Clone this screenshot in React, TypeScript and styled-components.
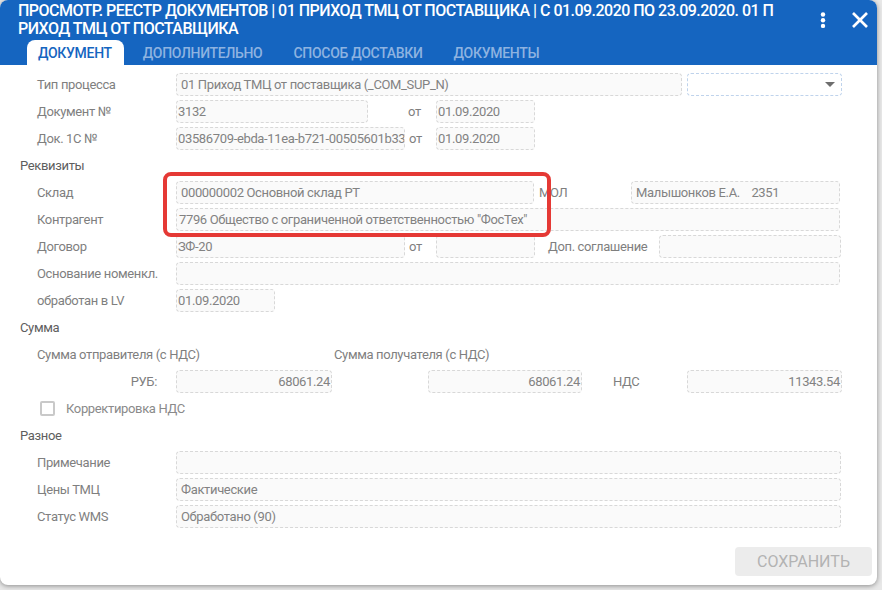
import React from "react";
import styled, { createGlobalStyle } from "styled-components";

const GlobalStyle = createGlobalStyle`
  html, body { margin: 0; padding: 0; }
  body { background: #e6e6e6; font-family: Roboto, "Noto Sans", Arial, sans-serif; }
  * { box-sizing: border-box; }
`;

const Page = styled.div`
  position: relative;
  width: 882px;
  height: 590px;
  overflow: hidden;
  background: #e8e8e8;
`;

const Dialog = styled.div`
  width: 877px;
  height: 585px;
  background: #ffffff;
  border-radius: 8px;
  box-shadow: 0 1px 5px rgba(0, 0, 0, 0.4);
  overflow: hidden;
  display: flex;
  flex-direction: column;
`;

const Header = styled.div`
  background: #1565c0;
  height: 65px;
  display: flex;
  flex-direction: column;
`;

const TitleBar = styled.div`
  display: flex;
  align-items: flex-start;
`;

const Title = styled.div`
  flex: 1;
  padding: 2px 0 0 18px;
  color: #ffffff;
  font-size: 16px;
  line-height: 18px;
  font-weight: 500;
  letter-spacing: -0.52px;
  text-transform: uppercase;
  white-space: nowrap;
  overflow: hidden;
`;

const Actions = styled.div`
  display: flex;
  align-items: center;
  gap: 11px;
  height: 40px;
  padding-right: 4px;
`;

const IconButton = styled.button`
  width: 26px;
  height: 26px;
  padding: 0;
  border: none;
  background: transparent;
  display: flex;
  align-items: center;
  justify-content: center;
  cursor: pointer;
`;

const Tabs = styled.div`
  margin-top: auto;
  display: flex;
  align-items: flex-end;
  gap: 8px;
  padding-left: 27px;
`;

const Tab = styled.div<{ $active?: boolean }>`
  height: 26px;
  padding: 0 12px 0 11px;
  display: flex;
  align-items: center;
  font-size: 14px;
  font-weight: 500;
  letter-spacing: -0.3px;
  text-transform: uppercase;
  border-radius: 8px 8px 0 0;
  background: ${(p) => (p.$active ? "#ffffff" : "transparent")};
  color: ${(p) => (p.$active ? "#1565c0" : "#8eb3e0")};
`;

const Body = styled.div`
  flex: 1;
  display: flex;
  flex-direction: column;
  padding-top: 6px;
  letter-spacing: -0.35px;
`;

const SectionTitle = styled.div`
  height: 27px;
  line-height: 27px;
  padding-left: 20px;
  font-size: 13px;
  color: #5e5e5e;
`;

const Row = styled.div`
  height: 27px;
  display: flex;
  align-items: center;
  padding-left: 37px;
`;

const Label = styled.div<{ $right?: boolean }>`
  width: 139px;
  flex: none;
  font-size: 13px;
  color: #7f7f7f;
  white-space: nowrap;
  text-align: ${(p) => (p.$right ? "right" : "left")};
  padding-right: ${(p) => (p.$right ? "19px" : "0")};
`;

const InlineLabel = styled.div<{ $w: number; $ml?: number }>`
  width: ${(p) => p.$w}px;
  margin-left: ${(p) => p.$ml ?? 0}px;
  flex: none;
  font-size: 13px;
  color: #7f7f7f;
  white-space: nowrap;
`;

const Field = styled.div<{ $w: number; $ml?: number; $pad?: number; $right?: boolean }>`
  width: ${(p) => p.$w}px;
  margin-left: ${(p) => p.$ml ?? 0}px;
  flex: none;
  height: 23px;
  border: 1px dashed #d8d8d8;
  border-radius: 4px;
  background: #fafafa;
  font-size: 13px;
  line-height: 21px;
  color: #828282;
  padding: 0 ${(p) => p.$pad ?? 1}px;
  white-space: nowrap;
  overflow: hidden;
  text-align: ${(p) => (p.$right ? "right" : "left")};
`;

const SelectBox = styled.div<{ $w: number; $ml?: number }>`
  width: ${(p) => p.$w}px;
  margin-left: ${(p) => p.$ml ?? 0}px;
  flex: none;
  height: 23px;
  border: 1px dashed #bfd3ec;
  border-radius: 4px;
  background: #ffffff;
  display: flex;
  align-items: center;
  justify-content: flex-end;
  padding-right: 6px;
`;

const Caret = styled.span`
  width: 0;
  height: 0;
  border-left: 5px solid transparent;
  border-right: 5px solid transparent;
  border-top: 5px solid #6e6e6e;
`;

const SumCaption = styled.div<{ $w: number }>`
  width: ${(p) => p.$w}px;
  flex: none;
  font-size: 13px;
  color: #7f7f7f;
  white-space: nowrap;
`;

const CheckRow = styled.label`
  height: 27px;
  display: flex;
  align-items: center;
  padding-left: 40px;
  gap: 11px;
  font-size: 13px;
  color: #8a8a8a;
`;

const CheckBox = styled.span`
  width: 15px;
  height: 15px;
  border: 2px solid #c9c9c9;
  border-radius: 2px;
  background: #ffffff;
`;

const Footer = styled.div`
  display: flex;
  justify-content: flex-end;
  padding: 17px 5px 0 0;
  letter-spacing: 0;
`;

const SaveButton = styled.button`
  width: 137px;
  height: 29px;
  border: none;
  border-radius: 4px;
  background: #ececec;
  color: #b3b3b3;
  font-family: Roboto, "Noto Sans", Arial, sans-serif;
  font-size: 16px;
  text-transform: uppercase;
  padding: 0;
`;

const Highlight = styled.div`
  position: absolute;
  left: 163px;
  top: 172px;
  width: 388px;
  height: 65px;
  border: 4px solid #e53935;
  border-radius: 8px;
  pointer-events: none;
`;

const KebabIcon = () => (
  <svg width="24" height="24" viewBox="0 0 24 24" fill="#ffffff">
    <circle cx="12" cy="6.5" r="2.2" />
    <circle cx="12" cy="12.2" r="2.2" />
    <circle cx="12" cy="17.9" r="2.2" />
  </svg>
);

const CloseIcon = () => (
  <svg width="26" height="26" viewBox="0 0 26 26" stroke="#ffffff" strokeWidth="2.6" fill="none">
    <line x1="6" y1="6" x2="20" y2="20" />
    <line x1="20" y1="6" x2="6" y2="20" />
  </svg>
);

export default function App() {
  return (
    <Page>
      <GlobalStyle />
      <Dialog>
        <Header>
          <TitleBar>
            <Title>
              ПРОСМОТР. РЕЕСТР ДОКУМЕНТОВ | 01 ПРИХОД ТМЦ ОТ ПОСТАВЩИКА | С 01.09.2020 ПО 23.09.2020. 01 П
              <br />
              РИХОД ТМЦ ОТ ПОСТАВЩИКА
            </Title>
            <Actions>
              <IconButton aria-label="menu">
                <KebabIcon />
              </IconButton>
              <IconButton aria-label="close">
                <CloseIcon />
              </IconButton>
            </Actions>
          </TitleBar>
          <Tabs>
            <Tab $active>Документ</Tab>
            <Tab>Дополнительно</Tab>
            <Tab>Способ доставки</Tab>
            <Tab>Документы</Tab>
          </Tabs>
        </Header>
        <Body>
          <Row>
            <Label>Тип процесса</Label>
            <Field $w={506} $pad={4}>01 Приход ТМЦ от поставщика (_COM_SUP_N)</Field>
            <SelectBox $w={155} $ml={5}>
              <Caret />
            </SelectBox>
          </Row>
          <Row>
            <Label>Документ №</Label>
            <Field $w={192}>3132</Field>
            <InlineLabel $w={28} $ml={40}>от</InlineLabel>
            <Field $w={99}>01.09.2020</Field>
          </Row>
          <Row>
            <Label>Док. 1С №</Label>
            <Field $w={229}>03586709-ebda-11ea-b721-00505601b33</Field>
            <InlineLabel $w={27} $ml={4}>от</InlineLabel>
            <Field $w={99}>01.09.2020</Field>
          </Row>

          <SectionTitle>Реквизиты</SectionTitle>
          <Row>
            <Label>Склад</Label>
            <Field $w={358} $pad={4}>000000002 Основной склад РТ</Field>
            <InlineLabel $w={92} $ml={5}>МОЛ</InlineLabel>
            <Field $w={209} $pad={4}>Малышонков Е.А.&nbsp;&nbsp;&nbsp;&nbsp;2351</Field>
          </Row>
          <Row>
            <Label>Контрагент</Label>
            <Field $w={664} $pad={2}>7796 Общество с ограниченной ответственностью "ФосТех"</Field>
          </Row>
          <Row>
            <Label>Договор</Label>
            <Field $w={229}>ЗФ-20</Field>
            <InlineLabel $w={27} $ml={4}>от</InlineLabel>
            <Field $w={99}></Field>
            <InlineLabel $w={111} $ml={13}>Доп. соглашение</InlineLabel>
            <Field $w={182}></Field>
          </Row>
          <Row>
            <Label>Основание номенкл.</Label>
            <Field $w={664}></Field>
          </Row>
          <Row>
            <Label>обработан в LV</Label>
            <Field $w={99}>01.09.2020</Field>
          </Row>

          <SectionTitle>Сумма</SectionTitle>
          <Row>
            <SumCaption $w={297}>Сумма отправителя (с НДС)</SumCaption>
            <SumCaption $w={250}>Сумма получателя (с НДС)</SumCaption>
          </Row>
          <Row>
            <Label $right>РУБ:</Label>
            <Field $w={156} $right>68061.24</Field>
            <Field $w={154} $ml={96} $right>68061.24</Field>
            <InlineLabel $w={74} $ml={31}>НДС</InlineLabel>
            <Field $w={155} $right>11343.54</Field>
          </Row>
          <CheckRow>
            <CheckBox />
            Корректировка НДС
          </CheckRow>

          <SectionTitle>Разное</SectionTitle>
          <Row>
            <Label>Примечание</Label>
            <Field $w={665}></Field>
          </Row>
          <Row>
            <Label>Цены ТМЦ</Label>
            <Field $w={665} $pad={4}>Фактические</Field>
          </Row>
          <Row>
            <Label>Статус WMS</Label>
            <Field $w={665} $pad={4}>Обработано (90)</Field>
          </Row>

          <Footer>
            <SaveButton>Сохранить</SaveButton>
          </Footer>
        </Body>
      </Dialog>
      <Highlight />
    </Page>
  );
}
